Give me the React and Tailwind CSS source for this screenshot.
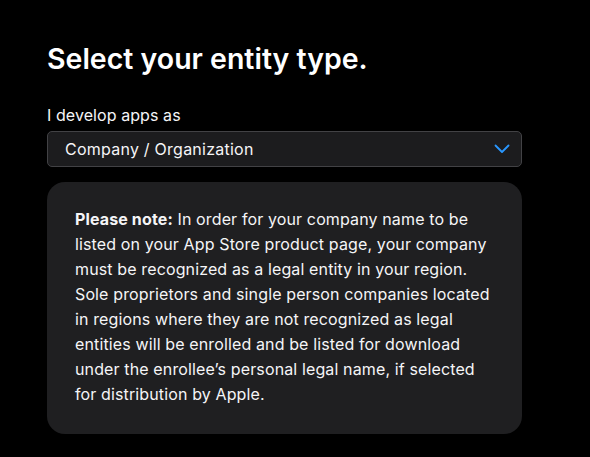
export default function App() {
  return (
    <div className="min-h-[457px] w-full bg-black text-white" style={{ fontFamily: 'Inter, "Noto Sans", sans-serif' }}>
      <div className="px-[47px] pt-[40px] w-[522px] box-content">
        <h1 className="text-[28.5px] leading-[37px] font-semibold">Select your entity type.</h1>

        <div className="mt-[28px] text-[16px] leading-[20px] tracking-[0.005em] text-[#f5f5f7]">I develop apps as</div>

        <div className="mt-[6px] flex h-[36px] w-[475px] items-center justify-between rounded-[5px] border border-[#424245] bg-[#1c1c1e] pl-[17px] pr-[11px]">
          <span className="text-[16px] tracking-[0.015em] text-[#f5f5f7]">Company / Organization</span>
          <svg width="16" height="10" viewBox="0 0 16 10" fill="none">
            <path d="M1.5 1.5 L8 8 L14.5 1.5" stroke="#2997ff" strokeWidth="1.8" strokeLinecap="round" strokeLinejoin="round" />
          </svg>
        </div>

        <div className="mt-[15px] w-[475px] rounded-[18px] bg-[#1f1f21] pl-[28px] pr-[26px] pt-[25px] pb-[27px]">
          <p className="text-[16px] leading-[25px] tracking-[0.008em] text-[#f5f5f7]">
            <span className="font-bold">Please note:</span> In order for your company name to be listed on your App Store product page, your company must be recognized as a legal entity in your region. Sole proprietors and single person companies located in regions where they are not recognized as legal entities will be enrolled and be listed for download under the enrollee’s personal legal name, if selected for distribution by Apple.
          </p>
        </div>
      </div>
    </div>
  )
}
